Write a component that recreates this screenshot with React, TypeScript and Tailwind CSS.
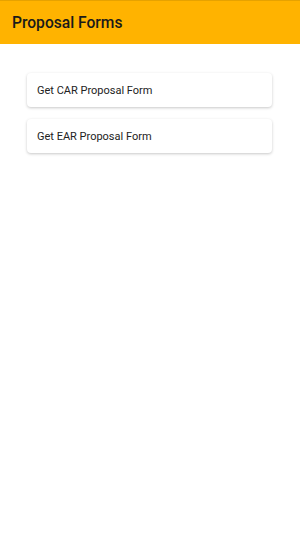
export default function App() {
  return (
    <div className="w-[300px] h-[549px] bg-white" style={{ fontFamily: 'Roboto, "Noto Sans", sans-serif' }}>
      <div className="h-[44px] bg-[#ffb300] border-t border-[#e6a200] flex items-center px-3 pt-[2px]">
        <span className="text-[15.6px] font-medium text-[#1a1a1a]">Proposal Forms</span>
      </div>
      <div className="flex flex-col gap-[12px] px-[27px] pt-[29px] pr-[28px]">
        <div className="h-[34px] bg-white rounded-[4px] shadow-[0_1px_3px_rgba(0,0,0,0.22)] flex items-center px-[10px] pt-[2px] text-[11px] text-[#222]">
          Get CAR Proposal Form
        </div>
        <div className="h-[34px] bg-white rounded-[4px] shadow-[0_1px_3px_rgba(0,0,0,0.22)] flex items-center px-[10px] pt-[2px] text-[11px] text-[#222]">
          Get EAR Proposal Form
        </div>
      </div>
    </div>
  );
}
